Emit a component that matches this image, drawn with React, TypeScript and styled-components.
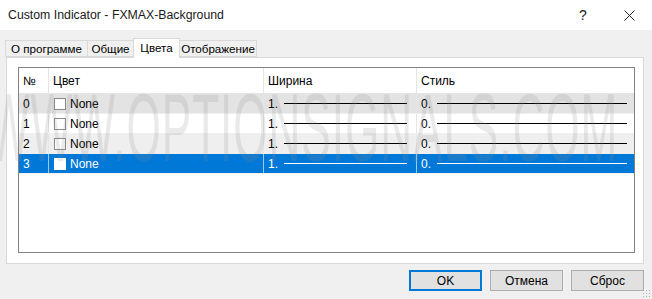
import styled, { createGlobalStyle } from "styled-components";

const GlobalStyle = createGlobalStyle`
  html, body {
    margin: 0;
    padding: 0;
    background: #f0f0f0;
  }
  body {
    font-family: "Liberation Sans", Arial, sans-serif;
    font-size: 12px;
    color: #000;
  }
`;

const Window = styled.div`
  position: relative;
  width: 652px;
  height: 299px;
  display: flex;
  flex-direction: column;
  background: #f0f0f0;
  overflow: hidden;
`;

const TitleBar = styled.div`
  height: 30px;
  flex: none;
  background: #fff;
  display: flex;
  align-items: center;
  padding-left: 8px;
`;

const Title = styled.div`
  flex: 1;
  font-size: 12.3px;
  color: #1a1a1a;
`;

const Caption = styled.div`
  display: flex;
  align-items: center;
  height: 100%;
`;

const CaptionButton = styled.div<{ $w: number }>`
  width: ${(p) => p.$w}px;
  height: 100%;
  display: flex;
  align-items: center;
  justify-content: center;
  font-size: 14px;
  color: #222;
`;

const Body = styled.div`
  flex: 1;
  display: flex;
  flex-direction: column;
  padding: 8px 8px 0 5px;
`;

const TabStrip = styled.div`
  display: flex;
  align-items: flex-end;
  height: 19px;
  position: relative;
  z-index: 1;
`;

const Tab = styled.div<{ $active?: boolean; $w: number }>`
  width: ${(p) => p.$w}px;
  box-sizing: border-box;
  height: ${(p) => (p.$active ? 20 : 17)}px;
  margin-bottom: ${(p) => (p.$active ? -1 : 0)}px;
  background: ${(p) => (p.$active ? "#fff" : "#f0f0f0")};
  border: 1px solid #d9d9d9;
  border-bottom: ${(p) => (p.$active ? "none" : "1px solid #d9d9d9")};
  margin-right: -1px;
  display: flex;
  align-items: ${(p) => (p.$active ? "flex-start" : "center")};
  padding-top: ${(p) => (p.$active ? 2 : 0)}px;
  justify-content: center;
  font-size: 11.6px;
  line-height: 14px;
  color: #000;
`;

const Panel = styled.div`
  height: 207px;
  margin-left: 1px;
  box-sizing: border-box;
  background: #fff;
  border: 1px solid #d9d9d9;
  padding: 9px 8px 10px 11px;
`;

const Table = styled.div`
  height: 100%;
  box-sizing: border-box;
  border: 1px solid #828282;
  background: #fff;
`;

const Row = styled.div<{ $bg: string; $head?: boolean }>`
  display: grid;
  grid-template-columns: 30px 215px 153px 1fr;
  height: ${(p) => (p.$head ? 25 : 19)}px;
  background: ${(p) => p.$bg};
  border-bottom: 1px solid ${(p) => (p.$head ? "#e5e5e5" : "#f0f0f0")};
`;

const Cell = styled.div<{ $sel?: boolean }>`
  display: flex;
  align-items: center;
  padding-left: 4px;
  border-right: 1px solid ${(p) => (p.$sel ? "#99c9ef" : "#e5e5e5")};
  color: ${(p) => (p.$sel ? "#fff" : "#000")};
  font-size: 12px;
  white-space: nowrap;
  overflow: hidden;

  &:last-child {
    border-right: none;
  }
`;

const Check = styled.span<{ $sel?: boolean }>`
  width: 10px;
  height: 10px;
  margin: 0 4px 0 1px;
  border: 1px solid ${(p) => (p.$sel ? "#fff" : "#8a8a8a")};
  background: #fff;
  flex: none;
`;

const LineSample = styled.span<{ $sel?: boolean; $w: number }>`
  width: ${(p) => p.$w}px;
  height: 1px;
  margin-left: 6px;
  background: ${(p) => (p.$sel ? "#fff" : "#000")};
  flex: none;
`;

const Footer = styled.div`
  display: flex;
  justify-content: flex-end;
  gap: 8px;
  padding: 6px 0 0 0;
`;

const Button = styled.button<{ $default?: boolean }>`
  width: 73px;
  height: 21px;
  box-sizing: border-box;
  background: #e1e1e1;
  border: ${(p) => (p.$default ? "2px solid #0078d7" : "1px solid #adadad")};
  font-family: "Liberation Sans", Arial, sans-serif;
  font-size: 12px;
  color: #000;
  padding: 0;
`;

const Watermark = styled.div`
  position: absolute;
  left: -12px;
  top: 80px;
  font-family: "Liberation Sans", Arial, sans-serif;
  font-size: 96px;
  line-height: 96px;
  letter-spacing: 2px;
  color: rgba(140, 140, 140, 0.18);
  transform: scaleX(0.46);
  transform-origin: left top;
  white-space: nowrap;
  pointer-events: none;
`;

const Grip = styled.div`
  position: absolute;
  right: 2px;
  bottom: 2px;
  width: 8px;
  height: 8px;
  background-image: radial-gradient(#b0b0b0 35%, transparent 40%);
  background-size: 3px 3px;
`;

const rows = [
  { n: "0", bg: "#e3e3e3" },
  { n: "1", bg: "#fff" },
  { n: "2", bg: "#efefef" },
  { n: "3", bg: "#0078d7", sel: true },
];

const tabs = [
  { label: "О программе", w: 83 },
  { label: "Общие", w: 47 },
  { label: "Цвета", w: 47, active: true },
  { label: "Отображение", w: 78 },
];

export default function App() {
  return (
    <>
      <GlobalStyle />
      <Window>
        <TitleBar>
          <Title>Custom Indicator - FXMAX-Background</Title>
          <Caption>
            <CaptionButton $w={46}>?</CaptionButton>
            <CaptionButton $w={46}>
              <svg width="11" height="11" viewBox="0 0 11 11">
                <path d="M0.5 0.5 L10.5 10.5 M10.5 0.5 L0.5 10.5" stroke="#222" strokeWidth="1" />
              </svg>
            </CaptionButton>
          </Caption>
        </TitleBar>
        <Body>
          <TabStrip>
            {tabs.map((t) => (
              <Tab key={t.label} $w={t.w} $active={t.active}>
                {t.label}
              </Tab>
            ))}
          </TabStrip>
          <Panel>
            <Table>
              <Row $bg="#fff" $head>
                <Cell>№</Cell>
                <Cell>Цвет</Cell>
                <Cell>Ширина</Cell>
                <Cell>Стиль</Cell>
              </Row>
              {rows.map((r) => (
                <Row key={r.n} $bg={r.bg}>
                  <Cell $sel={r.sel}>{r.n}</Cell>
                  <Cell $sel={r.sel}>
                    <Check $sel={r.sel} />
                    None
                  </Cell>
                  <Cell $sel={r.sel}>
                    1.
                    <LineSample $sel={r.sel} $w={123} />
                  </Cell>
                  <Cell $sel={r.sel}>
                    0.
                    <LineSample $sel={r.sel} $w={190} />
                  </Cell>
                </Row>
              ))}
            </Table>
          </Panel>
          <Footer>
            <Button $default>OK</Button>
            <Button>Отмена</Button>
            <Button>Сброс</Button>
          </Footer>
        </Body>
        <Watermark>WWW.OPTIONSIGNALS.COM</Watermark>
        <Grip />
      </Window>
    </>
  );
}
